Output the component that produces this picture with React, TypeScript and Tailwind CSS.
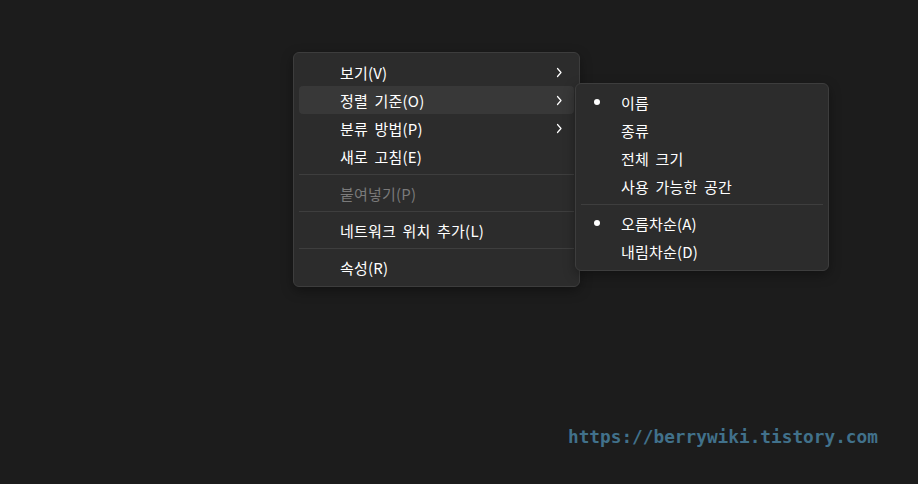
import React from "react";

const font = { fontFamily: '"Noto Sans CJK KR", "Noto Sans", sans-serif', wordSpacing: "3px" };

function Chevron() {
  return (
    <svg width="8" height="11" viewBox="0 0 8 11" className="shrink-0">
      <path d="M2.5 1.5 L6 5.5 L2.5 9.5" fill="none" stroke="#ffffff" strokeWidth="1.2" strokeLinecap="round" strokeLinejoin="round" />
    </svg>
  );
}

function Row({ label, arrow, active, disabled }: { label: string; arrow?: boolean; active?: boolean; disabled?: boolean }) {
  return (
    <div
      className={`h-[28px] flex items-center pl-[41px] pr-[11px] rounded-[4px] text-[15px] tracking-[0.2px] ${active ? "bg-[#383838]" : ""} ${disabled ? "text-[#7a7a7a]" : "text-white"}`}
    >
      <span className="flex-1 leading-none">{label}</span>
      {arrow && <Chevron />}
    </div>
  );
}

function Sep() {
  return (
    <div className="py-[4px]">
      <div className="h-px bg-[#3e3e3e]" />
    </div>
  );
}

function SubRow({ label, dot }: { label: string; dot?: boolean }) {
  return (
    <div className="h-[28px] flex items-center text-[15px] tracking-[0.2px] text-white">
      <div className="w-[40px] flex items-center pl-[13px]">
        {dot && <div className="w-[6px] h-[6px] rounded-full bg-white" />}
      </div>
      <span className="leading-none">{label}</span>
    </div>
  );
}

export default function App() {
  return (
    <div className="relative w-[918px] h-[484px] bg-[#1c1c1c] overflow-hidden" style={font}>
      <div className="absolute left-[293px] top-[52px] w-[287px] h-[235px] bg-[#2c2c2c] border border-[#3d3d3d] rounded-[6px] p-[5px] shadow-[0_4px_12px_rgba(0,0,0,0.35)]">
        <Row label="보기(V)" arrow />
        <Row label="정렬 기준(O)" arrow active />
        <Row label="분류 방법(P)" arrow />
        <Row label="새로 고침(E)" />
        <Sep />
        <Row label="붙여넣기(P)" disabled />
        <Sep />
        <Row label="네트워크 위치 추가(L)" />
        <Sep />
        <Row label="속성(R)" />
      </div>
      <div className="absolute left-[575px] top-[83px] w-[254px] h-[188px] bg-[#2c2c2c] border border-[#3d3d3d] rounded-[6px] px-[5px] py-[4px] shadow-[0_4px_12px_rgba(0,0,0,0.35)]">
        <SubRow label="이름" dot />
        <SubRow label="종류" />
        <SubRow label="전체 크기" />
        <SubRow label="사용 가능한 공간" />
        <Sep />
        <SubRow label="오름차순(A)" dot />
        <SubRow label="내림차순(D)" />
      </div>
      <div
        className="absolute left-[568px] top-[424px] text-[17.75px] leading-[26px] font-bold text-[#41718b]"
        style={{ fontFamily: '"DejaVu Sans Mono", monospace', wordSpacing: "0px" }}
      >
        https://berrywiki.tistory.com
      </div>
    </div>
  );
}
